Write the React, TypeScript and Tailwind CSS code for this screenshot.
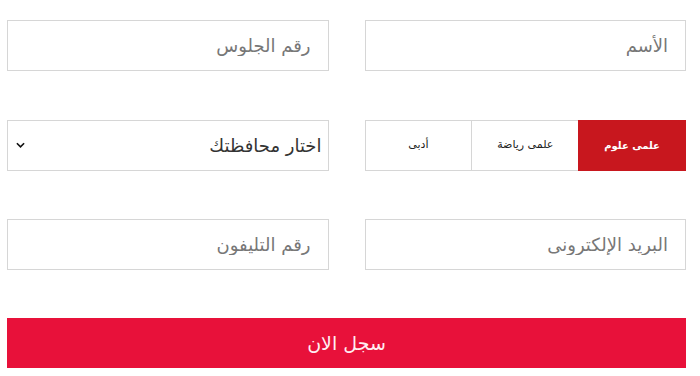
import { useState } from "react";

const tracks = ["علمى علوم", "علمى رياضة", "أدبى"];

function Field({ placeholder }: { placeholder: string }) {
  return (
    <input
      type="text"
      placeholder={placeholder}
      className="h-[51px] w-full border border-[#d6d6d6] bg-white pr-[17px] pl-3 text-right text-[18px] text-[#333] outline-none placeholder:text-[#777]"
    />
  );
}

export default function App() {
  const [track, setTrack] = useState(0);

  return (
    <div
      dir="rtl"
      className="h-[376px] w-[700px] bg-white pt-[20px] pr-[14px] pl-[7px]"
      style={{ fontFamily: '"DejaVu Sans", sans-serif' }}
    >
      <div className="grid grid-cols-2 gap-x-[36px]">
        <Field placeholder="الأسم" />
        <Field placeholder="رقم الجلوس" />
      </div>

      <div className="mt-[49px] grid grid-cols-2 gap-x-[36px]">
        <div className="flex h-[51px]">
          {tracks.map((label, i) => (
            <button
              key={label}
              onClick={() => setTrack(i)}
              className={
                i === track
                  ? "flex-1 border border-[#c8171e] bg-[#c8171e] text-[10px] font-bold text-white"
                  : "flex-1 border border-[#d6d6d6] border-r-0 bg-white text-[11px] text-[#222] first:border-r"
              }
            >
              {label}
            </button>
          ))}
        </div>
        <div className="relative h-[51px]">
          <select className="h-full w-full appearance-none border border-[#d6d6d6] bg-white pr-[6px] pl-8 text-[18px] text-[#333] outline-none">
            <option>اختار محافظتك</option>
            <option>القاهرة</option>
            <option>الجيزة</option>
            <option>الإسكندرية</option>
          </select>
          <svg
            viewBox="0 0 10 6"
            className="pointer-events-none absolute top-[22px] left-[9px] h-[6px] w-[9px]"
          >
            <path d="M1 1l4 4 4-4" fill="none" stroke="#111" strokeWidth="1.8" />
          </svg>
        </div>
      </div>

      <div className="mt-[48px] grid grid-cols-2 gap-x-[36px]">
        <Field placeholder="البريد الإلكترونى" />
        <Field placeholder="رقم التليفون" />
      </div>

      <button className="mt-[48px] h-[50px] w-full bg-[#e8113a] text-[19px] text-[#ffeef2]">
        سجل الان
      </button>
    </div>
  );
}
